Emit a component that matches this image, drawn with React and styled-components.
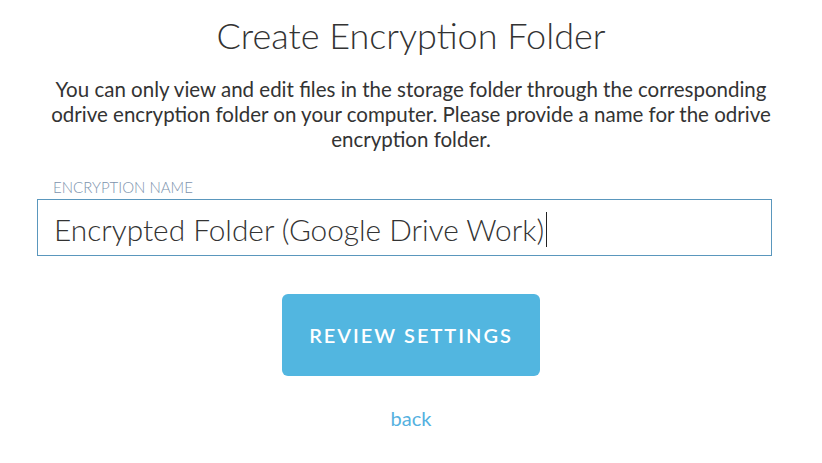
import React from 'react';
import styled, { createGlobalStyle } from 'styled-components';

const GlobalStyle = createGlobalStyle`
  body {
    margin: 0;
    background: #ffffff;
    font-family: Lato, "Open Sans", sans-serif;
    color: #333333;
  }
`;

const Page = styled.div`
  width: 822px;
  height: 463px;
  display: flex;
  flex-direction: column;
  align-items: center;
  overflow: hidden;
`;

const Title = styled.h1`
  margin: 12px 0 0;
  font-size: 36px;
  font-weight: 300;
  line-height: 46px;
  color: #333333;
`;

const Intro = styled.p`
  margin: 19px 0 0;
  width: 760px;
  text-align: center;
  font-size: 20.5px;
  line-height: 25px;
  color: #333333;
`;

const Field = styled.div`
  align-self: flex-start;
  margin: 26px 0 0 37px;
  width: 735px;
  display: flex;
  flex-direction: column;
`;

const Label = styled.label`
  padding-left: 16px;
  font-size: 15px;
  font-weight: 300;
  line-height: 18px;
  color: #7d93ad;
  text-transform: uppercase;
`;

const TextBox = styled.div`
  box-sizing: border-box;
  width: 100%;
  height: 57px;
  margin-top: 3px;
  padding: 3px 16px 0;
  border: 1px solid #5a97bd;
  display: flex;
  align-items: center;
  font-size: 29.8px;
  font-weight: 300;
  color: #333333;
  white-space: nowrap;
  cursor: text;
`;

const Caret = styled.span`
  display: inline-block;
  width: 1px;
  height: 35px;
  margin-left: 2px;
  background: #222222;
`;

const Button = styled.button`
  margin-top: 38px;
  width: 258px;
  height: 82px;
  border: none;
  border-radius: 6px;
  background: #52b6e0;
  color: #ffffff;
  font-family: Lato, sans-serif;
  font-size: 20px;
  font-weight: 600;
  letter-spacing: 2px;
  cursor: pointer;
`;

const BackLink = styled.a`
  margin-top: 30px;
  font-size: 20px;
  color: #55b1e0;
  text-decoration: none;
  cursor: pointer;
`;

export default function App() {
  return (
    <>
      <GlobalStyle />
      <Page>
        <Title>Create Encryption Folder</Title>
        <Intro>
          You can only view and edit files in the storage folder through the corresponding
          odrive encryption folder on your computer. Please provide a name for the odrive
          encryption folder.
        </Intro>
        <Field>
          <Label>Encryption Name</Label>
          <TextBox role="textbox">
            <span>Encrypted Folder (Google Drive Work)</span>
            <Caret />
          </TextBox>
        </Field>
        <Button>REVIEW SETTINGS</Button>
        <BackLink>back</BackLink>
      </Page>
    </>
  );
}
